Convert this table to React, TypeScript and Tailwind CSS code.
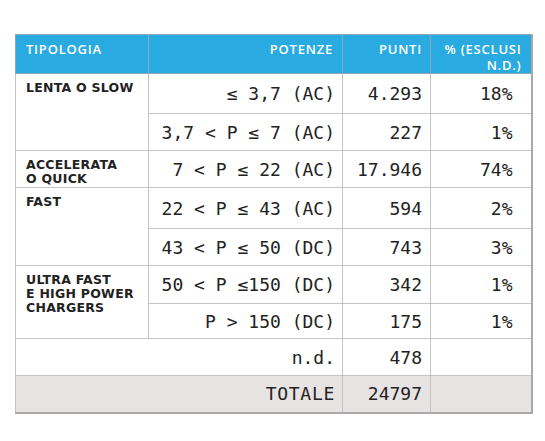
const mono = "font-['DejaVu_Sans_Mono',monospace] text-[18px] text-[#222]"
const label = "font-['DejaVu_Sans',sans-serif] font-bold text-[12.5px] leading-[14px] tracking-[0.02em] text-[#222] align-top pl-[10px] pt-[7px]"
const cell = "border border-[#c4c4c4] text-right align-middle"
const head = "border border-[#8fa7b3] align-top pt-[6px] font-semibold"

type Row = { potenza: string; punti: string; perc: string; h: string }

const groups: { label: string[]; rows: Row[] }[] = [
  {
    label: ["LENTA O SLOW"],
    rows: [
      { potenza: "≤ 3,7 (AC)", punti: "4.293", perc: "18%", h: "h-[40px]" },
      { potenza: "3,7 < P ≤ 7 (AC)", punti: "227", perc: "1%", h: "h-[37px]" },
    ],
  },
  {
    label: ["ACCELERATA", "O QUICK"],
    rows: [{ potenza: "7 < P ≤ 22 (AC)", punti: "17.946", perc: "74%", h: "h-[37px]" }],
  },
  {
    label: ["FAST"],
    rows: [
      { potenza: "22 < P ≤ 43 (AC)", punti: "594", perc: "2%", h: "h-[41px]" },
      { potenza: "43 < P ≤ 50 (DC)", punti: "743", perc: "3%", h: "h-[37px]" },
    ],
  },
  {
    label: ["ULTRA FAST", "E HIGH POWER", "CHARGERS"],
    rows: [
      { potenza: "50 < P ≤150 (DC)", punti: "342", perc: "1%", h: "h-[38px]" },
      { potenza: "P > 150 (DC)", punti: "175", perc: "1%", h: "h-[35px]" },
    ],
  },
]

export default function App() {
  return (
    <div className="w-[545px] h-[441px] bg-white pt-[34px] pl-[15px]">
      <table className="w-[516px] table-fixed border-collapse border-2 border-[#a9a9a9] border-t border-l">
        <colgroup>
          <col className="w-[133px]" />
          <col className="w-[194px]" />
          <col className="w-[88px]" />
          <col className="w-[101px]" />
        </colgroup>
        <thead>
          <tr className="h-[38px] bg-[#29aae1] text-white font-['Open_Sans',sans-serif] text-[13px] leading-[16px] tracking-[0.06em]">
            <th className={`${head} text-left pl-[10px]`}>TIPOLOGIA</th>
            <th className={`${head} text-right pr-[9px]`}>POTENZE</th>
            <th className={`${head} text-right pr-[8px]`}>PUNTI</th>
            <th className={`${head} text-right pr-[9px]`}>
              % (ESCLUSI
              <br />
              N.D.)
            </th>
          </tr>
        </thead>
        <tbody>
          {groups.map((g) =>
            g.rows.map((r, i) => (
              <tr key={r.potenza} className={r.h}>
                {i === 0 && (
                  <td rowSpan={g.rows.length} className={`border border-[#c4c4c4] ${label}`}>
                    {g.label.map((l) => (
                      <div key={l}>{l}</div>
                    ))}
                  </td>
                )}
                <td className={`${cell} ${mono} pr-[7px] whitespace-pre`}>{r.potenza}</td>
                <td className={`${cell} ${mono} pr-[8px]`}>{r.punti}</td>
                <td className={`${cell} ${mono} pr-[18px]`}>{r.perc}</td>
              </tr>
            ))
          )}
          <tr className="h-[37px]">
            <td colSpan={2} className={`${cell} ${mono} pr-[7px]`}>n.d.</td>
            <td className={`${cell} ${mono} pr-[8px]`}>478</td>
            <td className={cell}></td>
          </tr>
          <tr className="h-[37px] bg-[#e8e3e3]">
            <td colSpan={2} className={`${cell} ${mono} pr-[7px] tracking-[0.04em]`}>TOTALE</td>
            <td className={`${cell} ${mono} pr-[8px]`}>24797</td>
            <td className={cell}></td>
          </tr>
        </tbody>
      </table>
    </div>
  )
}
